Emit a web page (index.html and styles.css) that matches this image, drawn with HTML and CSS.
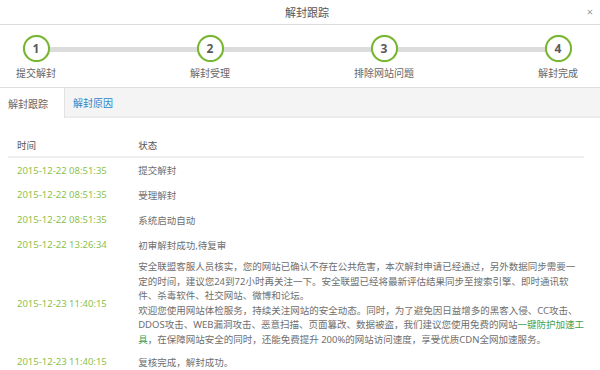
FILE: index.html
```html
<!DOCTYPE html>
<html lang="zh-CN">
<head>
<meta charset="utf-8">
<title>解封跟踪</title>
<link rel="stylesheet" href="styles.css">
</head>
<body>
<div class="dialog">
  <header class="titlebar">
    <span class="title">解封跟踪</span>
    <span class="close">×</span>
  </header>
  <div class="steps">
    <div class="step"><span class="num">1</span><span class="label">提交解封</span></div>
    <div class="step"><span class="num">2</span><span class="label">解封受理</span></div>
    <div class="step"><span class="num">3</span><span class="label">排除网站问题</span></div>
    <div class="step"><span class="num">4</span><span class="label">解封完成</span></div>
  </div>
  <nav class="tabs">
    <span class="tab active">解封跟踪</span>
    <span class="tab">解封原因</span>
  </nav>
  <table class="log">
    <thead>
      <tr><th class="c-time">时间</th><th>状态</th></tr>
    </thead>
    <tbody>
      <tr><td class="c-time">2015-12-22 08:51:35</td><td>提交解封</td></tr>
      <tr><td class="c-time">2015-12-22 08:51:35</td><td>受理解封</td></tr>
      <tr><td class="c-time">2015-12-22 08:51:35</td><td>系统启动自动</td></tr>
      <tr><td class="c-time">2015-12-22 13:26:34</td><td>初审解封成功,待复审</td></tr>
      <tr class="long">
        <td class="c-time">2015-12-23 11:40:15</td>
        <td class="msg">安全联盟客服人员核实，您的网站已确认不存在公共危害，本次解封申请已经通过，另外数据同步需要一<br>定的时间，建议您24到72小时再关注一下。安全联盟已经将最新评估结果同步至搜索引擎、即时通讯软<br>件、杀毒软件、社交网站、微博和论坛。<br>欢迎您使用网站体检服务，持续关注网站的安全动态。同时，为了避免因日益增多的黑客入侵、CC攻击、<br>DDOS攻击、WEB漏洞攻击、恶意扫描、页面篡改、数据被盗，我们建议您使用免费的网站<a class="link">一键防护加速工<br>具</a>，在保障网站安全的同时，还能免费提升 200%的网站访问速度，享受优质CDN全网加速服务。</td>
      </tr>
      <tr><td class="c-time">2015-12-23 11:40:15</td><td>复核完成，解封成功。</td></tr>
    </tbody>
  </table>
</div>
</body>
</html>
```
FILE: styles.css
```css
* { box-sizing: border-box; }
html, body { margin: 0; padding: 0; background: #fff; }
body {
  width: 600px;
  height: 370px;
  overflow: hidden;
  font-family: "Noto Sans", "Noto Sans CJK SC", sans-serif;
  font-size: 9.5px;
  color: #6e6e6e;
}
.dialog { width: 600px; }

.titlebar {
  position: relative;
  height: 25px;
  border-bottom: 1px solid #dcdcdc;
  display: flex;
  align-items: center;
  justify-content: center;
}
.title { font-size: 11px; color: #555; padding-left: 14px; }
.close {
  position: absolute;
  right: 7px;
  top: 4px;
  font-size: 11px;
  color: #999;
}

.steps {
  position: relative;
  display: flex;
  justify-content: space-between;
  padding: 10px 12px 0 6px;
  height: 62px;
}
.steps::before {
  content: "";
  position: absolute;
  left: 36px;
  right: 42px;
  top: 22px;
  height: 5px;
  background: #dcdcdc;
}
.step {
  position: relative;
  width: 60px;
  display: flex;
  flex-direction: column;
  align-items: center;
}
.num {
  width: 27px;
  height: 27px;
  border-radius: 50%;
  border: 2px solid #76b530;
  background: #fff;
  color: #5a5a5a;
  font-weight: bold;
  font-size: 12px;
  display: flex;
  align-items: center;
  justify-content: center;
  box-shadow: 0 0 1px #b7d98f;
}
.label {
  margin-top: 3px;
  font-size: 10px;
  color: #666;
  white-space: nowrap;
}

.tabs {
  display: flex;
  height: 31px;
  background: #f4f4f4;
  border-top: 1px solid #dedede;
  border-bottom: 2px solid #ececec;
}
.tab {
  display: flex;
  align-items: center;
  padding: 0 16px 0 8px;
  font-size: 10px;
  color: #2e86c8;
}
.tab.active {
  background: #fff;
  color: #666;
  width: 65px;
  border-right: 1px solid #e2e2e2;
  margin-bottom: -2px;
}

.log {
  margin: 15px 0 0 8px;
  width: 576px;
  border-collapse: collapse;
}
.log th {
  text-align: left;
  font-weight: normal;
  color: #555;
  height: 24px;
  padding: 0 0 0 9px;
  border-bottom: 2px solid #eeeeee;
}
.log td {
  height: 25px;
  padding: 0 0 0 9px;
  vertical-align: middle;
  white-space: nowrap;
}
.log .c-time { width: 152px; color: #8cbf4c; }
.log th.c-time { color: #555; }
.long td { padding-top: 3px; padding-bottom: 2px; }
.msg { line-height: 14.5px; }
.link { color: #3d9f54; }
```
